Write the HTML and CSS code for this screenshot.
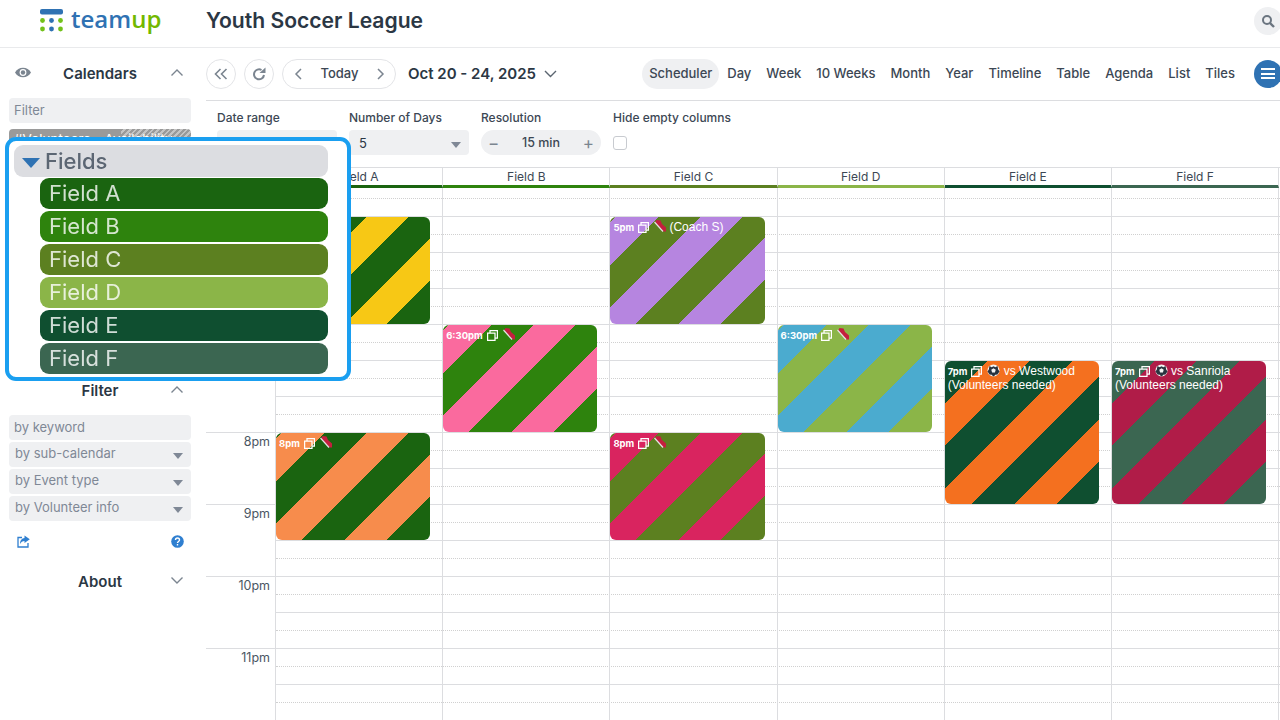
FILE: index.html
```html
<!DOCTYPE html>
<html lang="en">
<head>
  <meta charset="UTF-8">
  <title>Youth Soccer League</title>
  <link rel="stylesheet" href="styles.css">
</head>
<body>
  <svg class="icon-defs" width="0" height="0">
    <symbol id="copy" viewBox="0 0 11 11"><path d="M3 3V.6h7.400V8H8M.6 3H8v7.400H.6z" fill="none" stroke="#fff" stroke-width="1.250"/></symbol>
    <symbol id="shoe" viewBox="0 0 12 12"><path d="M2.500 0l4 .5L8 4l4 3.500V11.500H9.500L1 2.500z" fill="#c41f3e"/><path d="M.5 2L9 11.500" stroke="#e4e4e4" stroke-width="1.200"/></symbol>
    <symbol id="ball" viewBox="0 0 14 14"><circle cx="7" cy="7" r="6.500" fill="#f4f4f4"/><path d="M7 4.500l2.400 1.800-.9 2.900h-3l-.9-2.900zM7 .5v1.800L5 3.500 2.600 2.200 2 6l-1.500 2 2.500 3.500 1.500-.2L7 13.500l2.500-2.200 1.500.2L13.500 8 12 6l-.6-3.800L9 3.500 7 2.300z" fill="#2a3440"/></symbol>
  </svg>

  <header class="topbar">
    <div class="logo">
      <svg class="logo-mark" width="24" height="29" viewBox="0 0 24 29">
        <rect x="0" y="0" width="23" height="5.500" rx="2" fill="#2f72b3"/>
        <circle cx="2.500" cy="11.500" r="2.400" fill="#72c11a"/><circle cx="11.500" cy="11.500" r="2.400" fill="#2f72b3"/><circle cx="20.500" cy="11.500" r="2.400" fill="#72c11a"/>
        <circle cx="2.500" cy="20" r="2.400" fill="#72c11a"/><circle cx="11.500" cy="20" r="2.400" fill="#2f72b3"/><circle cx="20.500" cy="20" r="2.400" fill="#72c11a"/>
      </svg>
      <span class="logo-text">team<span class="logo-up">up</span></span>
    </div>
    <h1 class="title">Youth Soccer League</h1>
    <button class="search-btn">
      <svg width="14" height="14" viewBox="0 0 14 14"><circle cx="6" cy="6" r="4" fill="none" stroke="#6b7580" stroke-width="2"/><path d="M9 9l4 4" stroke="#6b7580" stroke-width="2.400"/></svg>
    </button>
  </header>

  <div class="layout">
    <aside class="sidebar">
      <div class="side-head">
        <svg class="eye" width="16" height="11" viewBox="0 0 16 11"><path d="M0 5.500C3-.8 13-.8 16 5.500 13 11.800 3 11.800 0 5.500z" fill="#7b8590"/><circle cx="8" cy="5.500" r="3.400" fill="#fff"/><circle cx="8" cy="5.500" r="2.200" fill="#7b8590"/></svg>
        <span class="side-title">Calendars</span>
        <svg class="caret" width="12" height="7" viewBox="0 0 12 7"><path d="M.5 6.500l5.500-5.500 5.500 5.500" fill="none" stroke="#7b8590" stroke-width="1.400"/></svg>
      </div>
      <div class="side-input">Filter</div>
      <div class="volunteers">#Volunteers - Availability</div>

      <div class="side-head filter-head">
        <span class="side-title">Filter</span>
        <svg class="caret" width="12" height="7" viewBox="0 0 12 7"><path d="M.5 6.500l5.500-5.500 5.500 5.500" fill="none" stroke="#7b8590" stroke-width="1.400"/></svg>
      </div>
      <div class="filters">
        <div class="side-input">by keyword</div>
        <div class="side-input side-select">by sub-calendar<i class="tri"></i></div>
        <div class="side-input side-select">by Event type<i class="tri"></i></div>
        <div class="side-input side-select">by Volunteer info<i class="tri"></i></div>
      </div>
      <div class="side-tools">
        <svg width="13" height="13" viewBox="0 0 13 13"><path d="M5 2.500H1v9.500h10V8" fill="none" stroke="#2f7fd0" stroke-width="1.300"/><path d="M7.500.5l5.300 3.800L7.500 8V6C5.500 6 4 7 3 9 3 5.500 5 3.200 7.500 3z" fill="#2f7fd0"/></svg>
        <svg width="13" height="13" viewBox="0 0 13 13"><circle cx="6.500" cy="6.500" r="6.300" fill="#2f7fd0"/><path d="M4.500 5c0-2.600 4-2.600 4 0 0 1.500-2 1.500-2 3" fill="none" stroke="#fff" stroke-width="1.400"/><rect x="5.800" y="9" width="1.400" height="1.500" fill="#fff"/></svg>
      </div>
      <div class="side-head about-head">
        <span class="side-title">About</span>
        <svg class="caret" width="12" height="7" viewBox="0 0 12 7"><path d="M.5.5L6 6l5.500-5.500" fill="none" stroke="#7b8590" stroke-width="1.400"/></svg>
      </div>
    </aside>

    <main class="main">
      <div class="toolbar">
        <button class="round-btn">
          <svg width="14" height="12" viewBox="0 0 14 12"><path d="M6.500 1L1.500 6l5 5M12.500 1l-5 5 5 5" fill="none" stroke="#7b8590" stroke-width="1.600"/></svg>
        </button>
        <button class="round-btn">
          <svg width="14" height="14" viewBox="0 0 14 14"><path d="M12 8A5 5 0 1 1 9.500 3" fill="none" stroke="#7b8590" stroke-width="2"/><path d="M7.500 6h6V.5z" fill="#7b8590"/></svg>
        </button>
        <div class="nav-group">
          <svg width="8" height="12" viewBox="0 0 8 12"><path d="M7 1L2 6l5 5" fill="none" stroke="#7b8590" stroke-width="1.500"/></svg>
          <span class="today">Today</span>
          <svg width="8" height="12" viewBox="0 0 8 12"><path d="M1 1l5 5-5 5" fill="none" stroke="#7b8590" stroke-width="1.500"/></svg>
        </div>
        <div class="date-range">Oct 20 - 24, 2025
          <svg width="13" height="8" viewBox="0 0 13 8"><path d="M1 1l5.500 5.500L12 1" fill="none" stroke="#5b6570" stroke-width="1.400"/></svg>
        </div>
        <nav class="views">
          <span class="view view-active">Scheduler</span>
          <span class="view">Day</span>
          <span class="view">Week</span>
          <span class="view">10 Weeks</span>
          <span class="view">Month</span>
          <span class="view">Year</span>
          <span class="view">Timeline</span>
          <span class="view">Table</span>
          <span class="view">Agenda</span>
          <span class="view">List</span>
          <span class="view">Tiles</span>
        </nav>
        <button class="menu-btn"><i></i><i></i><i></i></button>
      </div>

      <div class="options">
        <div class="option">
          <label>Date range</label>
          <div class="opt-box">10/20/2025</div>
        </div>
        <div class="option">
          <label>Number of Days</label>
          <div class="opt-box">5<i class="tri"></i></div>
        </div>
        <div class="option">
          <label>Resolution</label>
          <div class="stepper"><span>−</span><b>15 min</b><span>+</span></div>
        </div>
        <div class="option">
          <label>Hide empty columns</label>
          <div class="check"></div>
        </div>
      </div>

      <div class="sched">
        <div class="gutter">
          <div class="hour">5pm</div>
          <div class="hour">6pm</div>
          <div class="hour">7pm</div>
          <div class="hour">8pm</div>
          <div class="hour">9pm</div>
          <div class="hour">10pm</div>
          <div class="hour">11pm</div>
        </div>
        <div class="grid">
          <div class="heads">
            <div class="head head-a">Field A</div>
            <div class="head head-b">Field B</div>
            <div class="head head-c">Field C</div>
            <div class="head head-d">Field D</div>
            <div class="head head-e">Field E</div>
            <div class="head head-f">Field F</div>
          </div>
          <div class="body">
            <div class="slots">
              <div></div><div></div><div></div><div></div><div></div><div></div>
              <div></div><div></div><div></div><div></div><div></div><div></div>
              <div></div><div></div><div></div><div></div><div></div><div></div>
              <div></div><div></div><div></div><div></div><div></div><div></div>
              <div></div><div></div><div></div><div></div><div></div><div></div>
            </div>
            <div class="cols">
              <div class="col">
                <div class="event ev-long ev-yellow" style="top:29px"></div>
                <div class="event ev-long ev-orange" style="top:245px"><b>8pm</b><svg class="ic-copy"><use href="#copy"/></svg><svg class="ic-shoe"><use href="#shoe"/></svg></div>
              </div>
              <div class="col">
                <div class="event ev-long ev-pink" style="top:137px"><b>6:30pm</b><svg class="ic-copy"><use href="#copy"/></svg><svg class="ic-shoe"><use href="#shoe"/></svg></div>
              </div>
              <div class="col">
                <div class="event ev-long ev-purple" style="top:29px"><b>5pm</b><svg class="ic-copy"><use href="#copy"/></svg><svg class="ic-shoe"><use href="#shoe"/></svg> (Coach S)</div>
                <div class="event ev-long ev-crimson" style="top:245px"><b>8pm</b><svg class="ic-copy"><use href="#copy"/></svg><svg class="ic-shoe"><use href="#shoe"/></svg></div>
              </div>
              <div class="col">
                <div class="event ev-long ev-blue" style="top:137px"><b>6:30pm</b><svg class="ic-copy"><use href="#copy"/></svg><svg class="ic-shoe"><use href="#shoe"/></svg></div>
              </div>
              <div class="col">
                <div class="event ev-tall ev-tangerine" style="top:173px"><b>7pm</b><svg class="ic-copy"><use href="#copy"/></svg><svg class="ic-ball"><use href="#ball"/></svg> vs Westwood<br>(Volunteers needed)</div>
              </div>
              <div class="col">
                <div class="event ev-tall ev-wine" style="top:173px"><b>7pm</b><svg class="ic-copy"><use href="#copy"/></svg><svg class="ic-ball"><use href="#ball"/></svg> vs Sanriola<br>(Volunteers needed)</div>
              </div>
            </div>
          </div>
        </div>
      </div>
    </main>
  </div>

  <!-- zoomed callout over the calendar list -->
  <div class="callout">
    <div class="group-row"><i class="group-tri"></i>Fields</div>
    <div class="field-row fr-a">Field A</div>
    <div class="field-row fr-b">Field B</div>
    <div class="field-row fr-c">Field C</div>
    <div class="field-row fr-d">Field D</div>
    <div class="field-row fr-e">Field E</div>
    <div class="field-row fr-f">Field F</div>
  </div>
</body>
</html>
```

FILE: styles.css
```css
* { box-sizing: border-box; }
html, body { height: 720px; overflow: hidden; }
body {
  margin: 0;
  font-family: Inter, "Liberation Sans", sans-serif;
  color: #2b3744;
  background: #fff;
}
.icon-defs { position: absolute; }
button { padding: 0; border: none; background: none; font: inherit; }

/* top bar */
.topbar {
  display: flex;
  align-items: center;
  height: 48px;
  border-bottom: 1px solid #e9eaec;
  padding-left: 40px;
}
.logo { display: flex; align-items: flex-start; width: 166px; height: 47px; padding-top: 9px; }
.logo-mark { flex: none; }
.logo-text {
  margin: -7px 0 0 7px;
  font-family: "Open Sans", sans-serif;
  font-size: 24px;
  font-weight: 600;
  color: #2f72b3;
}
.logo-up { color: #72b800; }
.title { margin: 0; padding-bottom: 6px; font-size: 21.100px; font-weight: 600; color: #2b3744; }
.search-btn {
  margin-left: auto;
  margin-right: -2px;
  margin-bottom: 5px;
  width: 28px;
  height: 28px;
  border-radius: 50%;
  background: #eff0f2;
  display: flex;
  align-items: center;
  justify-content: center;
}

.layout { display: flex; height: 672px; }

/* sidebar */
.sidebar { width: 206px; flex: none; padding: 0 15px 0 9px; }
.side-head { display: flex; align-items: center; justify-content: center; position: relative; height: 20px; }
.sidebar > .side-head:first-child { margin: 15px 0 15px; }
.side-title { font-size: 15px; font-weight: 600; color: #2b3744; }
.eye { position: absolute; left: 6px; top: 4px; }
.caret { position: absolute; right: 8px; top: 6px; }
.side-input {
  height: 25px;
  line-height: 25px;
  padding: 0 5px;
  border-radius: 4px;
  background: #eff0f2;
  font-size: 13px;
  color: #7f8896;
  position: relative;
}
.volunteers {
  margin-top: 6px;
  height: 25px;
  padding: 2px 5px;
  border-radius: 4px;
  background: repeating-linear-gradient(135deg, #9a9a9a 0 2px, #c4c4c4 2px 4px) right / 70px 100% no-repeat, #9a9a9a;
  font-size: 13.500px;
  color: #fff;
  white-space: nowrap;
  overflow: hidden;
}
.filter-head { margin-top: 226px; margin-bottom: 15px; }
.filters { display: flex; flex-direction: column; gap: 2px; }
.side-select { line-height: 23px; padding-left: 6px; }
.tri {
  position: absolute;
  right: 8px;
  top: 11px;
  border-style: solid;
  border-width: 6px 5px 0;
  border-color: #7f8896 transparent transparent;
}
.side-tools { display: flex; justify-content: space-between; padding: 0 7px 0 8px; margin-top: 14px; }
.about-head { margin-top: 23px; }

/* toolbar */
.main { flex: 1; min-width: 0; }
.toolbar { display: flex; align-items: center; height: 53px; padding-bottom: 1px; border-bottom: 1px solid #dcdde0; }
.round-btn {
  width: 30px;
  height: 30px;
  margin-right: 8px;
  border: 1px solid #e3e4e7;
  border-radius: 50%;
  display: flex;
  align-items: center;
  justify-content: center;
}
.nav-group {
  display: flex;
  align-items: center;
  justify-content: space-between;
  width: 114px;
  height: 30px;
  padding: 0 10px 0 11px;
  border: 1px solid #e3e4e7;
  border-radius: 15px;
}
.today { margin-bottom: 2px; font-size: 13px; font-weight: 500; color: #3c4754; }
.date-range { display: flex; align-items: center; gap: 8px; margin-left: 12px; font-size: 15px; font-weight: 600; }
.views { display: flex; align-items: center; gap: 1px; margin-left: auto; margin-right: 12px; }
.view { padding: 0 7px 2px; font-size: 13px; font-weight: 500; line-height: 28px; color: #3c4754; }
.view-active { background: #eff0f2; border-radius: 15px; }
.menu-btn {
  flex: none;
  width: 28px;
  height: 28px;
  margin-right: -2px;
  border-radius: 50%;
  background: #2f72b3;
  display: flex;
  flex-direction: column;
  align-items: center;
  justify-content: center;
  gap: 2.500px;
}
.menu-btn i { width: 14px; height: 2px; background: #fff; }

/* option row */
.options { display: flex; height: 66px; padding: 9px 0 0 11px; }
.option { width: 132px; }
.option label { display: block; font-size: 12px; font-weight: 500; line-height: 15px; color: #3c4754; }
.opt-box {
  position: relative;
  width: 120px;
  height: 25px;
  margin-top: 5px;
  padding: 0 10px;
  border-radius: 4px;
  background: #eff0f2;
  font-size: 13px;
  line-height: 26px;
}
.opt-box .tri { top: 12px; }
.stepper {
  display: flex;
  align-items: center;
  justify-content: space-between;
  width: 120px;
  height: 25px;
  margin-top: 5px;
  padding: 0 7px;
  border-radius: 13px;
  background: #eff0f2;
  font-size: 17px;
  color: #7b8590;
}
.stepper b { font-weight: 500; color: #3c4754; font-size: 12.500px; }
.check { width: 14px; height: 14px; margin-top: 11px; border: 1px solid #c8cbd0; border-radius: 3px; }

/* scheduler */
.sched { display: flex; }
.gutter { width: 69px; flex: none; padding-top: 49px; }
.hour {
  height: 72px;
  border-top: 1px solid #dcdde0;
  padding: 1px 5px 0 0;
  text-align: right;
  font-size: 12.500px;
  color: #4b5663;
}
.grid { width: 1005px; flex: none; border-top: 1px solid #dcdde0; border-left: 1px solid #dcdde0; }
.heads { display: flex; height: 20px; }
.head {
  width: 167.200px;
  height: 20px;
  padding-top: 1px;
  border-right: 1px solid #dcdde0;
  border-bottom: 3px solid;
  text-align: center;
  font-size: 12px;
  color: #3c4754;
}
.head-a { border-bottom-color: #1a6410; }
.head-b { border-bottom-color: #2e830d; }
.head-c { border-bottom-color: #5c8020; }
.head-d { border-bottom-color: #8bb548; }
.head-e { border-bottom-color: #0f4f30; }
.head-f { border-bottom-color: #3b6651; }
.body { position: relative; height: 532px; }
.slots div { height: 18px; border-bottom: 1px dotted #d0d0d0; }
.slots div:first-child { height: 11px; }
.slots div:nth-child(even) { border-bottom: 1px solid #dcdde0; }
.cols { position: absolute; inset: 0; display: flex; }
.col { width: 167.200px; position: relative; border-right: 1px solid #dcdde0; }

/* events */
.event {
  position: absolute;
  left: 0;
  width: 154.250px;
  padding: 3px 3px;
  border-radius: 6px;
  font-family: "Liberation Sans", sans-serif;
  font-size: 12px;
  line-height: 14px;
  color: #fff;
  overflow: hidden;
}
.event b { font-family: Inter, sans-serif; font-size: 9.500px; font-weight: 700; line-height: 1; }
.event svg { vertical-align: -2px; }
.ic-copy { width: 11px; height: 11px; margin-left: 4px; }
.event .ic-shoe { width: 12px; height: 12px; margin-left: 5px; vertical-align: -1px; }
.ic-ball { width: 13px; height: 13px; margin-left: 5px; }
.ev-long { height: 107px; }
.ev-tall { height: 143px; }
.ev-yellow { background: repeating-linear-gradient(135deg, #f7c815 4px 34px, #1a6410 34px 64px); }
.ev-orange { background: repeating-linear-gradient(135deg, #f78c4c 4px 34px, #1a6410 34px 64px); }
.ev-pink { background: repeating-linear-gradient(135deg, #fa6a9e 4px 34px, #2e830d 34px 64px); }
.ev-purple { background: repeating-linear-gradient(135deg, #b685e0 4px 34px, #5c8020 34px 64px); }
.ev-crimson { background: repeating-linear-gradient(135deg, #d9245f 4px 34px, #5c8020 34px 64px); }
.ev-blue { background: repeating-linear-gradient(135deg, #4babcf 4px 34px, #8bb548 34px 64px); }
.ev-tangerine { background: repeating-linear-gradient(135deg, #f4701f 30px 60px, #0f4f30 60px 90px); }
.ev-wine { background: repeating-linear-gradient(135deg, #b01c48 30px 60px, #3b6651 60px 90px); }

/* zoomed callout */
.callout {
  position: absolute;
  left: 5px;
  top: 137px;
  width: 346px;
  height: 244px;
  padding: 4px 19px 0 5px;
  background: #fff;
  border: 4px solid #1a9ff0;
  border-radius: 11px;
}
.group-row {
  display: flex;
  align-items: center;
  height: 32px;
  margin-bottom: 1px;
  padding-left: 8px;
  border-radius: 9px;
  background: #dcdde1;
  font-size: 22px;
  font-weight: 500;
  color: #5c6673;
  filter: blur(0.5px);
}
.group-tri {
  margin: 3px 5px 0 0;
  border-style: solid;
  border-width: 10px 9px 0;
  border-color: #2f72b3 transparent transparent;
}
.field-row {
  height: 31px;
  margin: 0 0 2px 26px;
  padding-left: 9px;
  border-radius: 9px;
  font-size: 22px;
  line-height: 31px;
  color: rgba(255, 255, 255, 0.8);
  filter: blur(0.5px);
}
.fr-a { background: #1a6410; }
.fr-b { background: #2e830d; }
.fr-c { background: #5c8020; }
.fr-d { background: #8bb548; }
.fr-e { background: #0f4f30; }
.fr-f { background: #3b6651; }
```
